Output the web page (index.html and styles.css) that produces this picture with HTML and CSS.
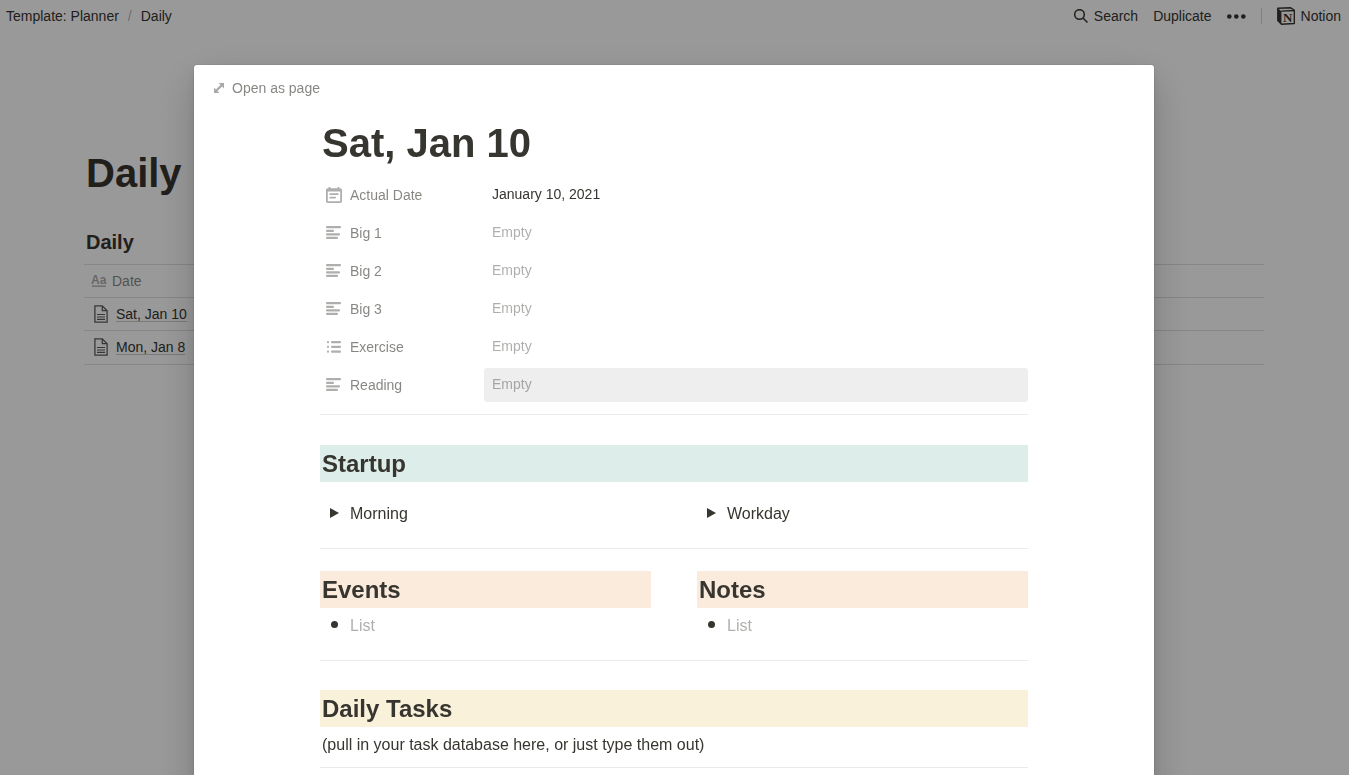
FILE: index.html
```html
<!DOCTYPE html>
<html lang="en">
<head>
    <meta charset="UTF-8">
    <meta name="viewport" content="width=device-width, initial-scale=1.0">
    <title>Daily</title>
    <link rel="stylesheet" href="styles.css">
</head>
<body>
    <!-- shared icons -->
    <svg class="sprite" aria-hidden="true">
        <symbol id="icon-text" viewBox="0 0 16 16">
            <rect x="0" y="1" width="15" height="2.3" rx="1"/>
            <rect x="0" y="4.8" width="8" height="2.3" rx="1"/>
            <rect x="0" y="8.3" width="14" height="2.3" rx="1"/>
            <rect x="0" y="11.8" width="12" height="2.3" rx="1"/>
        </symbol>
        <symbol id="icon-date" viewBox="0 0 14 14">
            <path d="M10.9 5.5H3.1v1.5h7.8zM12.4 1.06h-.8V0h-1.5v1.06H3.9V0H2.3v1.06h-.8C.7 1.06 0 1.76 0 2.6v9.9C0 13.36.7 14 1.56 14h10.88c.86 0 1.56-.64 1.56-1.5V2.6c0-.85-.7-1.55-1.56-1.55zM12.44 12.5H1.56V3.94h10.88zM8.56 8.6H3.1v1.5h5.46z"/>
        </symbol>
        <symbol id="icon-list" viewBox="0 0 16 16">
            <circle cx="2" cy="3.2" r="1.1"/>
            <circle cx="2" cy="7.9" r="1.1"/>
            <circle cx="2" cy="12.7" r="1.1"/>
            <rect x="5" y="2.1" width="10" height="2.2" rx="1"/>
            <rect x="5" y="6.8" width="10" height="2.2" rx="1"/>
            <rect x="5" y="11.6" width="10" height="2.2" rx="1"/>
        </symbol>
        <symbol id="icon-page" viewBox="0 0 18 18">
            <path d="M2.9.9h7.4l4.8 4.8v11.4H2.9zM10.3.9v4.8h4.8" fill="none" stroke="currentColor" stroke-width="1.3"/>
            <path d="M5 9.5h8M5 12h8M5 14.4h8" stroke="currentColor" stroke-width="1.2"/>
        </symbol>
    </svg>

    <header class="topbar">
        <nav class="breadcrumb">
            <a href="#">Template: Planner</a>
            <span class="slash">/</span>
            <a href="#">Daily</a>
        </nav>
        <div class="topbar-actions">
            <button type="button" class="search-btn">
                <svg width="14" height="14" viewBox="0 0 14 14" fill="none" stroke="currentColor" stroke-width="1.5">
                    <circle cx="5.5" cy="5.5" r="4.8"/>
                    <path d="M9 9l4.5 4.5"/>
                </svg>
                Search
            </button>
            <button type="button">Duplicate</button>
            <button type="button" class="more-btn" aria-label="More">
                <svg width="19" height="5" viewBox="0 0 19 5" fill="currentColor">
                    <circle cx="2.3" cy="2.5" r="2.3"/>
                    <circle cx="9.3" cy="2.5" r="2.3"/>
                    <circle cx="16.3" cy="2.5" r="2.3"/>
                </svg>
            </button>
            <a href="#" class="brand">
                <svg width="18" height="18" viewBox="0 0 18 18">
                    <path d="M.8 1.3L13.7.7l3.6 2.6v13.2l-12.8.8L.8 13.4z" fill="none" stroke="currentColor" stroke-width="1.4" stroke-linejoin="round"/>
                    <path d="M.8 1.3l3.6 3v13.2L.8 13.4z" fill="currentColor"/>
                    <path d="M4.3 4.2l13-.7" stroke="currentColor" stroke-width="1.3"/>
                    <text x="6" y="15" class="brand-letter">N</text>
                </svg>
                Notion
            </a>
        </div>
    </header>

    <main class="page">
        <h1>Daily</h1>
        <h2>Daily</h2>
        <table class="database">
            <thead>
                <tr>
                    <th scope="col">
                        <span class="cell column-name">
                            <svg width="14" height="12" viewBox="0 0 14 12" fill="currentColor">
                                <text x="-1" y="9" class="type-letters">Aa</text>
                                <rect x="0" y="10.5" width="14" height="1.3"/>
                            </svg>
                            Date
                        </span>
                    </th>
                </tr>
            </thead>
            <tbody>
                <tr>
                    <td>
                        <span class="cell">
                            <svg class="page-icon"><use href="#icon-page"/></svg>
                            <a href="#">Sat, Jan 10</a>
                        </span>
                    </td>
                </tr>
                <tr>
                    <td>
                        <span class="cell">
                            <svg class="page-icon"><use href="#icon-page"/></svg>
                            <a href="#">Mon, Jan 8</a>
                        </span>
                    </td>
                </tr>
            </tbody>
        </table>
    </main>

    <div class="overlay">
        <div class="modal" role="dialog" aria-modal="true" aria-labelledby="entryTitle">
            <div class="modal-bar">
                <a href="#" class="open-link">
                    <svg width="10" height="10" viewBox="0 0 10 10" fill="currentColor">
                        <path d="M4.6 0H10v5.4L8.1 3.5 3.5 8.1 5.4 10H0V4.6l1.9 1.9 4.6-4.6z"/>
                    </svg>
                    Open as page
                </a>
            </div>

            <article class="entry">
                <h1 id="entryTitle">Sat, Jan 10</h1>

                <dl class="properties">
                    <div class="property">
                        <dt><svg><use href="#icon-date"/></svg>Actual Date</dt>
                        <dd>January 10, 2021</dd>
                    </div>
                    <div class="property">
                        <dt><svg><use href="#icon-text"/></svg>Big 1</dt>
                        <dd class="empty">Empty</dd>
                    </div>
                    <div class="property">
                        <dt><svg><use href="#icon-text"/></svg>Big 2</dt>
                        <dd class="empty">Empty</dd>
                    </div>
                    <div class="property">
                        <dt><svg><use href="#icon-text"/></svg>Big 3</dt>
                        <dd class="empty">Empty</dd>
                    </div>
                    <div class="property">
                        <dt><svg><use href="#icon-list"/></svg>Exercise</dt>
                        <dd class="empty">Empty</dd>
                    </div>
                    <div class="property">
                        <dt><svg><use href="#icon-text"/></svg>Reading</dt>
                        <dd class="empty active">Empty</dd>
                    </div>
                </dl>

                <hr>

                <section class="block">
                    <h2 class="teal">Startup</h2>
                    <div class="columns toggles">
                        <button type="button" class="line" aria-expanded="false">
                            <span class="marker"><svg width="9" height="10" viewBox="0 0 9 10"><path d="M0 0l9 5-9 5z" fill="currentColor"/></svg></span>
                            Morning
                        </button>
                        <button type="button" class="line" aria-expanded="false">
                            <span class="marker"><svg width="9" height="10" viewBox="0 0 9 10"><path d="M0 0l9 5-9 5z" fill="currentColor"/></svg></span>
                            Workday
                        </button>
                    </div>
                </section>

                <hr>

                <div class="columns lists">
                    <section>
                        <h2 class="orange">Events</h2>
                        <ul>
                            <li class="line"><span class="marker"><span class="bullet"></span></span><span class="placeholder">List</span></li>
                        </ul>
                    </section>
                    <section>
                        <h2 class="orange">Notes</h2>
                        <ul>
                            <li class="line"><span class="marker"><span class="bullet"></span></span><span class="placeholder">List</span></li>
                        </ul>
                    </section>
                </div>

                <hr>

                <section class="block tasks">
                    <h2 class="yellow">Daily Tasks</h2>
                    <p>(pull in your task database here, or just type them out)</p>
                </section>

                <hr>
            </article>
        </div>
    </div>
</body>
</html>
```

FILE: styles.css
```css
* { box-sizing: border-box; }

body {
    margin: 0;
    color: #37352f;
    background: #fff;
    font-family: "Liberation Sans", Arial, sans-serif;
    font-size: 14px;
    line-height: 20px;
}

h1, h2, p, ul, dl, dd { margin: 0; padding: 0; }
h1 { font-size: 40px; line-height: 48px; }
ul { list-style: none; }
a { color: inherit; text-decoration: none; }
svg { display: block; flex-shrink: 0; }

button {
    padding: 0;
    border: none;
    background: none;
    color: inherit;
    font: inherit;
    cursor: pointer;
}

.sprite { position: absolute; width: 0; height: 0; }

/* top bar */
.topbar {
    display: flex;
    align-items: center;
    justify-content: space-between;
    height: 32px;
    padding: 0 8px 0 6px;
}
.breadcrumb { display: flex; gap: 9px; }
.slash { color: rgba(55, 53, 47, 0.4); }
.topbar-actions { display: flex; align-items: center; gap: 15px; }
.search-btn, .brand { display: flex; align-items: center; gap: 6px; }
.brand {
    position: relative;
    padding-left: 16px;
}
.brand::before {
    content: "";
    position: absolute;
    left: 0;
    width: 1px;
    height: 16px;
    background: rgba(55, 53, 47, 0.2);
}
.brand-letter {
    font-family: "Liberation Serif", serif;
    font-size: 13px;
    font-weight: bold;
    fill: currentColor;
}

/* page behind the modal */
.page { padding: 117px 85px 0 84px; }
.page h1, .page h2 { padding-left: 2px; }
.page h2 {
    margin-top: 32px;
    font-size: 20px;
    line-height: 26px;
}
.database {
    width: 100%;
    margin-top: 9px;
    border-collapse: collapse;
    border-top: 1px solid rgba(55, 53, 47, 0.16);
}
.database th, .database td {
    height: 33px;
    padding: 0 8px;
    border-bottom: 1px solid rgba(55, 53, 47, 0.16);
    font-weight: normal;
    text-align: left;
}
.database tr:last-child td { padding-bottom: 1px; height: 34px; }
.database thead th { height: 33px; }
.cell { display: flex; align-items: center; gap: 6px; }
.column-name { color: rgba(55, 53, 47, 0.6); }
.column-name svg { opacity: 0.7; overflow: visible; }
.type-letters { font-size: 12px; font-weight: bold; }
.page-icon { width: 18px; height: 18px; color: rgba(55, 53, 47, 0.8); }
.cell a {
    line-height: 14px;
    border-bottom: 1px solid rgba(55, 53, 47, 0.25);
}

/* modal */
.overlay {
    position: fixed;
    inset: 0;
    padding: 65px 1px 0 0;
    overflow-y: auto;
    scrollbar-width: none;
    background: rgba(0, 0, 0, 0.4);
}
.modal {
    max-width: 960px;
    min-height: 100%;
    margin: 0 auto;
    border-radius: 3px;
    background: #fff;
    box-shadow: 0 0 0 1px rgba(15, 15, 15, 0.05), 0 5px 10px rgba(15, 15, 15, 0.1), 0 15px 40px rgba(15, 15, 15, 0.2);
}
.modal-bar {
    display: flex;
    align-items: center;
    height: 46px;
    padding: 0 20px;
}
.open-link {
    display: flex;
    align-items: center;
    gap: 8px;
    color: rgba(55, 53, 47, 0.6);
}
.open-link svg { opacity: 0.7; }

.entry {
    padding: 8px 126px 120px;
    font-size: 16px;
    line-height: 24px;
}
.entry h1 { padding-left: 2px; }
.entry h2 {
    padding: 3px 2px;
    font-size: 24px;
    line-height: 31px;
}
.entry hr {
    height: 1px;
    margin: 0;
    border: none;
    background: rgba(55, 53, 47, 0.1);
}
.teal { background: #ddedea; }
.orange { background: #faebdd; }
.yellow { background: #faf1db; }

.properties {
    display: flex;
    flex-direction: column;
    gap: 4px;
    margin: 11px 0 12px;
    font-size: 14px;
    line-height: 20px;
}
.property { display: flex; height: 34px; }
.property dt {
    display: flex;
    align-items: center;
    gap: 8px;
    width: 164px;
    padding-left: 6px;
    color: rgba(55, 53, 47, 0.6);
}
.property dt svg {
    width: 16px;
    height: 16px;
    fill: rgba(55, 53, 47, 0.4);
}
.property dd {
    flex: 1;
    padding: 6px 8px;
    border-radius: 3px;
}
.property .empty { color: rgba(55, 53, 47, 0.4); }
.property .active { background: #eee; }

.block { padding-top: 30px; }
.columns {
    display: grid;
    grid-template-columns: 1fr 1fr;
    gap: 46px;
}
.toggles { padding: 20px 0 22px; }
.lists { padding: 22px 0; }
.lists ul { padding-top: 6px; }
.line {
    display: flex;
    align-items: center;
    gap: 4px;
    padding-left: 2px;
}
.marker {
    display: flex;
    justify-content: center;
    width: 24px;
    padding-bottom: 3px;
}
.bullet {
    width: 7px;
    height: 7px;
    border-radius: 50%;
    background: currentColor;
}
.placeholder { color: rgba(55, 53, 47, 0.4); }
.tasks { padding: 29px 0 10px; }
.tasks p { padding: 6px 2px 0; }
```
